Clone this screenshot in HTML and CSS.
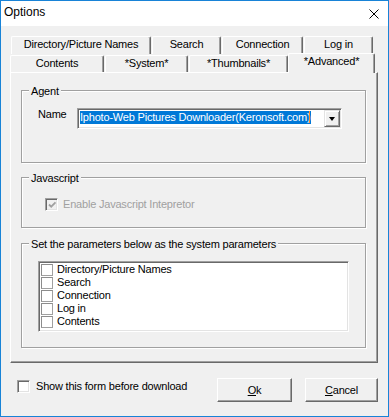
FILE: index.html
```html
<!DOCTYPE html>
<html>
<head>
<meta charset="utf-8">
<title>Options</title>
<link rel="stylesheet" href="styles.css">
</head>
<body>
<div class="window">
  <div class="titlebar">
    <span class="title">Options</span>
    <svg class="close" width="10" height="10" viewBox="0 0 10 10"><path d="M0.5 0.5 L9.5 9.5 M9.5 0.5 L0.5 9.5" stroke="#000" stroke-width="1" fill="none"/></svg>
  </div>
  <div class="client">
    <div class="tabrow back">
      <div class="tab t-dir">Directory/Picture Names</div>
      <div class="tab t-search">Search</div>
      <div class="tab t-conn">Connection</div>
      <div class="tab t-login">Log in</div>
    </div>
    <div class="tabrow front">
      <div class="tab t-contents">Contents</div>
      <div class="tab t-system">*System*</div>
      <div class="tab t-thumbs">*Thumbnails*</div>
      <div class="tab active t-adv">*Advanced*</div>
    </div>
    <div class="panel">
      <div class="group g-agent">
        <div class="legend">Agent</div>
        <div class="name-row">
          <span class="name-label">Name</span>
          <div class="combo">
            <span class="sel">Iphoto-Web Pictures Downloader(Keronsoft.com)</span><span class="caret"></span>
            <div class="drop"><span class="arrow"></span></div>
          </div>
        </div>
      </div>
      <div class="group g-js">
        <div class="legend">Javascript</div>
        <div class="check-row">
          <span class="cb cb-disabled"><svg width="9" height="9" viewBox="0 0 9 9"><path d="M1 3.5 L3.2 5.7 L7.5 1.4" stroke="#a0a0a0" stroke-width="1.8" fill="none"/></svg></span>
          <span class="disabled-text">Enable Javascript Intepretor</span>
        </div>
      </div>
      <div class="group g-params">
        <div class="legend">Set the parameters below as the system parameters</div>
        <div class="listbox">
          <div class="item"><span class="lcb"></span><span>Directory/Picture Names</span></div>
          <div class="item"><span class="lcb"></span><span>Search</span></div>
          <div class="item"><span class="lcb"></span><span>Connection</span></div>
          <div class="item"><span class="lcb"></span><span>Log in</span></div>
          <div class="item"><span class="lcb"></span><span>Contents</span></div>
        </div>
      </div>
    </div>
    <div class="footer">
      <span class="cb cb-main"></span>
      <span class="footer-text">Show this form before download</span>
      <button class="btn btn-ok"><u>O</u>k</button>
      <button class="btn btn-cancel"><u>C</u>ancel</button>
    </div>
  </div>
</div>
</body>
</html>
```

FILE: styles.css
```css
html, body {
  margin: 0;
  padding: 0;
  background: #f0f0f0;
}
body {
  font-family: "Liberation Sans", Arial, sans-serif;
  font-size: 11px;
  letter-spacing: -0.2px;
  color: #000;
}
.window {
  width: 389px;
  height: 417px;
  box-sizing: border-box;
  border: 1px solid #1883d7;
  background: #f0f0f0;
  overflow: hidden;
}
.titlebar {
  height: 25px;
  background: #fff;
  display: flex;
  justify-content: space-between;
  align-items: flex-start;
}
.title {
  font-size: 12px;
  letter-spacing: 0;
  line-height: 14px;
  padding: 4px 0 0 3px;
}
.close {
  margin: 8px 9px 0 0;
  display: block;
}
.client {
  padding-top: 10px;
}
.tabrow {
  display: flex;
}
.tabrow.back {
  height: 18px;
  margin-left: 10px;
  gap: 1px;
}
.tabrow.front {
  height: 19px;
  margin-top: -1px;
  margin-left: 9px;
  align-items: flex-end;
  gap: 1px;
}
.tab {
  box-sizing: border-box;
  height: 18px;
  border-top: 1px solid #fff;
  border-left: 1px solid #fff;
  border-right: 1px solid #696969;
  border-top-left-radius: 2px;
  border-top-right-radius: 2px;
  box-shadow: inset -1px 0 0 #a0a0a0;
  background: #f0f0f0;
  text-align: center;
  padding-top: 1px;
  line-height: 13px;
  white-space: nowrap;
}
.front .tab {
  height: 17px;
}
.front .tab.active {
  height: 20px;
  margin-bottom: -1px;
  margin-left: -1px;
  position: relative;
  z-index: 1;
}
.t-dir { width: 140px; }
.t-search { width: 69px; }
.t-conn { width: 81px; }
.t-login { width: 69px; }
.t-contents { width: 94px; }
.t-system { width: 83px; }
.t-thumbs { width: 99px; }
.t-adv { width: 87px; }

.panel {
  margin-left: 9px;
  width: 368px;
  box-sizing: border-box;
  border-top: 1px solid #fff;
  border-left: 1px solid #fff;
  border-right: 1px solid #696969;
  border-bottom: 1px solid #696969;
  box-shadow: inset -1px -1px 0 #a0a0a0;
  padding: 0 11px 14px 10px;
}
.group {
  box-sizing: border-box;
  border: 1px solid #a0a0a0;
  box-shadow: 1px 1px 0 #fff, inset 1px 1px 0 #fff;
}
.g-agent { margin-top: 17px; height: 73px; }
.g-js { margin-top: 14px; height: 51px; }
.g-params { margin-top: 15px; height: 105px; }
.legend {
  width: fit-content;
  margin: -6px 0 0 7px;
  padding: 0 2px;
  background: #f0f0f0;
  line-height: 13px;
  white-space: nowrap;
}
.name-row {
  display: flex;
  align-items: flex-start;
  margin-top: 10px;
  padding-left: 16px;
}
.name-label {
  width: 39px;
  line-height: 13px;
}
.combo {
  box-sizing: border-box;
  width: 265px;
  height: 21px;
  background: #fff;
  border-top: 1px solid #a0a0a0;
  border-left: 1px solid #a0a0a0;
  border-right: 1px solid #fff;
  border-bottom: 1px solid #fff;
  box-shadow: inset 1px 1px 0 #696969, inset -1px -1px 0 #e3e3e3;
  display: flex;
  align-items: flex-start;
  padding-left: 2px;
}
.sel {
  margin-top: 2px;
  background: #0078d7;
  color: #fff;
  line-height: 13px;
  height: 13px;
  padding-right: 1px;
  white-space: nowrap;
}
.caret {
  width: 1px;
  height: 12px;
  margin-top: 2px;
  margin-left: -2px;
  background: #ff8728;
}
.drop {
  box-sizing: border-box;
  width: 16px;
  height: 17px;
  margin: 1px 1px 0 auto;
  background: #f0f0f0;
  border-top: 1px solid #e3e3e3;
  border-left: 1px solid #e3e3e3;
  border-right: 1px solid #696969;
  border-bottom: 1px solid #696969;
  box-shadow: inset 1px 1px 0 #fff, inset -1px -1px 0 #a0a0a0;
  display: flex;
  align-items: center;
  justify-content: center;
}
.arrow {
  width: 0;
  height: 0;
  border-left: 3.5px solid transparent;
  border-right: 3.5px solid transparent;
  border-top: 4px solid #000;
}
.check-row {
  display: flex;
  align-items: flex-start;
  margin-top: 13px;
  padding-left: 23px;
}
.cb {
  box-sizing: border-box;
  width: 13px;
  height: 13px;
  border-top: 1px solid #a0a0a0;
  border-left: 1px solid #a0a0a0;
  border-right: 1px solid #fff;
  border-bottom: 1px solid #fff;
  box-shadow: inset 1px 1px 0 #696969, inset -1px -1px 0 #e3e3e3;
  background: #fff;
  display: flex;
  align-items: center;
  justify-content: center;
  flex: none;
}
.cb-disabled {
  background: #f0f0f0;
}
.cb-disabled svg {
  display: block;
  margin: 1px 0 0 1px;
}
.disabled-text {
  color: #a0a0a0;
  margin-left: 5px;
  line-height: 13px;
}
.listbox {
  box-sizing: border-box;
  margin: 10px 0 0 16px;
  width: 311px;
  height: 71px;
  background: #fff;
  border-top: 1px solid #a0a0a0;
  border-left: 1px solid #a0a0a0;
  border-right: 1px solid #fff;
  border-bottom: 1px solid #fff;
  box-shadow: inset 1px 1px 0 #696969, inset -1px -1px 0 #e3e3e3;
  padding: 1px 0 0 2px;
}
.item {
  display: flex;
  align-items: center;
  height: 13px;
  line-height: 13px;
}
.lcb {
  box-sizing: border-box;
  width: 12px;
  height: 12px;
  border: 1px solid #a0a0a0;
  border-top-color: #8c8c8c;
  border-left-color: #8c8c8c;
  background: #fff;
  margin-right: 4px;
  flex: none;
}
.footer {
  display: flex;
  align-items: flex-start;
  margin-top: 15px;
  height: 24px;
}
.cb-main {
  margin: 2px 0 0 16px;
}
.footer-text {
  margin: 2px 0 0 6px;
  line-height: 13px;
}
.btn {
  box-sizing: border-box;
  height: 24px;
  font: inherit;
  letter-spacing: inherit;
  color: #000;
  background: #f0f0f0;
  border-top: 1px solid #fff;
  border-left: 1px solid #fff;
  border-right: 1px solid #696969;
  border-bottom: 1px solid #696969;
  box-shadow: inset -1px -1px 0 #a0a0a0;
  padding: 0;
  line-height: 13px;
}
.btn u {
  text-underline-offset: 1px;
}
.btn-ok {
  width: 75px;
  margin-left: auto;
}
.btn-cancel {
  width: 73px;
  margin-left: 13px;
  margin-right: 10px;
}
```
